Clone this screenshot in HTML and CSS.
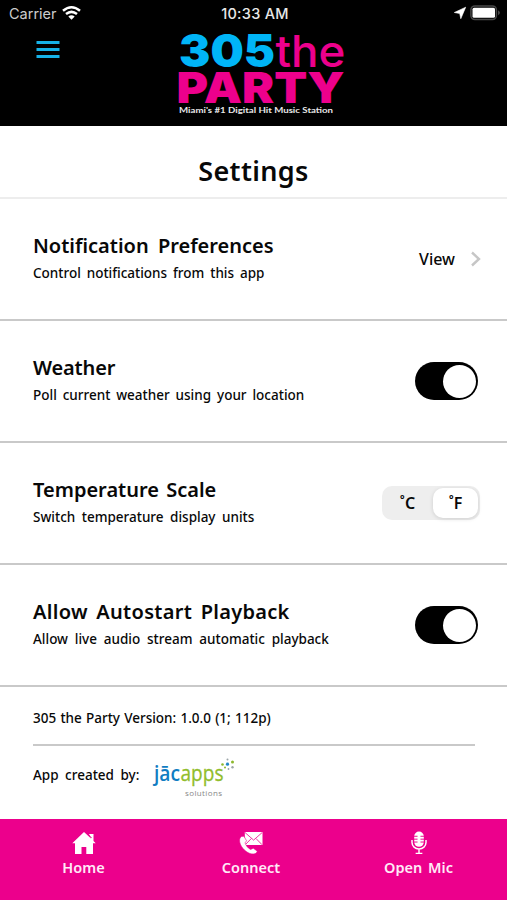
FILE: index.html
```html
<!DOCTYPE html>
<html lang="en">
<head>
<meta charset="utf-8">
<title>Settings</title>
<link rel="stylesheet" href="styles.css">
</head>
<body>
<header class="top">
  <div class="status">
    <div class="status-left">
      <span class="carrier">Carrier</span>
      <svg class="wifi" width="19" height="14" viewBox="0 0 19 14"><g fill="none" stroke="#fff" stroke-width="2.5"><path d="M1 4.8Q9.5-2.2 18 4.8"/><path d="M4 8.1Q9.5 3.7 15 8.1"/></g><path d="M6.3 10.5Q9.5 8 12.7 10.5L9.5 13.8Z" fill="#fff"/></svg>
    </div>
    <span class="clock">10:33 AM</span>
    <div class="status-right">
      <svg width="12" height="12" viewBox="0 0 12 12"><path d="M11.7.2 6.8 11.7 5.7 6.5.3 5.5Z" fill="#fff" stroke="#fff" stroke-width=".6"/></svg>
      <svg width="31" height="16" viewBox="0 0 31 16"><rect x=".9" y=".9" width="25.5" height="13.7" rx="4" fill="none" stroke="#484848" stroke-width="1.5"/><rect x="2.5" y="2.7" width="22.5" height="10" rx="1.5" fill="#fff"/><path d="M28 5.3Q32 7.8 28 10.3Z" fill="#484848"/></svg>
    </div>
  </div>
  <div class="brandbar">
    <svg class="menu" width="24" height="19" viewBox="0 0 24 19"><path d="M.5 2.5h23M.5 9.5h23M.5 16.5h23" stroke="#16b2e8" stroke-width="3.2"/></svg>
    <svg class="logo" width="190" height="92" viewBox="165 30 190 92">
      <text x="179" y="67.4" textLength="96" lengthAdjust="spacingAndGlyphs" class="blue">305</text>
      <text x="275.5" y="67.4" textLength="70" lengthAdjust="spacingAndGlyphs" class="the">the</text>
      <text x="176.5" y="102.5" textLength="168" lengthAdjust="spacingAndGlyphs" class="party">PARTY</text>
      <text x="179" y="113.2" textLength="154" lengthAdjust="spacingAndGlyphs" class="tagline">Miami's #1 Digital Hit Music Station</text>
    </svg>
  </div>
</header>
<main>
  <h1><span>Settings</span></h1>
  <section class="row">
    <div><h2 class="t1">Notification Preferences</h2><p class="p1">Control notifications from this app</p></div>
    <div class="view"><span>View</span><svg width="12" height="18" viewBox="0 0 12 18"><path d="M2 2.5 9 9 2 15.5" fill="none" stroke="#c6c6c6" stroke-width="2.4"/></svg></div>
  </section>
  <section class="row">
    <div><h2 class="t2">Weather</h2><p class="p2">Poll current weather using your location</p></div>
    <div class="toggle"><i></i></div>
  </section>
  <section class="row">
    <div><h2 class="t3">Temperature Scale</h2><p class="p3">Switch temperature display units</p></div>
    <div class="segment"><span>˚C</span><span class="on">˚F</span></div>
  </section>
  <section class="row">
    <div><h2 class="t4">Allow Autostart Playback</h2><p class="p4">Allow live audio stream automatic playback</p></div>
    <div class="toggle"><i></i></div>
  </section>
  <section class="about">
    <p class="version">305 the Party Version: 1.0.0 (1; 112p)</p>
    <div class="credit"><span class="by">App created by:</span>
      <svg width="90" height="44" viewBox="150 755 90 44"><text class="jac" x="154" y="781" textLength="26" lengthAdjust="spacingAndGlyphs">jāc</text><text class="apps" x="180.5" y="781" textLength="43" lengthAdjust="spacingAndGlyphs">apps</text><text class="solutions" x="185" y="796" textLength="37" lengthAdjust="spacing">solutions</text>
      <g fill="#8cb82b"><circle cx="222.5" cy="764.5" r="1.3"/><circle cx="232.5" cy="762" r="1.5"/><circle cx="225" cy="767.5" r="1"/></g><g fill="#9ba4a8"><circle cx="227.5" cy="759.5" r="1"/><circle cx="232.5" cy="767.3" r="1.2"/><circle cx="228.5" cy="769" r=".9"/></g><circle cx="227.5" cy="764.2" r="1.6" fill="#2387c6"/></svg>
    </div>
  </section>
</main>
<nav>
  <a class="home"><svg width="24" height="24" viewBox="0 0 24 24"><path d="M12 1 .3 12.2H3V23h6.5v-7h4.8v7H21V12.2h2.7L21.5 10V3H17l2.300 4.800L12 1Z" fill="#fff"/><path d="m16.500 3.800 3.200 3.200" stroke="#ec008c" stroke-width=".8"/></svg><span>Home</span></a>
  <a class="connect"><svg width="24" height="24" viewBox="0 0 24 24"><path d="M5.8 1h17.7v13H5.8Z" fill="#fff"/><path d="m6 1.500 8.600 7.600 8.600-7.600M6.300 13.700l6-6.200M23 13.700l-6-6.200" fill="none" stroke="#ec008c" stroke-width=".8"/><path d="M2.500 5.400C-.6 7.300.1 12.800 4 17.500c3.900 4.700 9.800 6.900 13.300 4.600l1-1.900-4-3-2.700 1.300C8.700 17 7 14.300 6 11.900L7.600 9.800 4.900 5.200Z" fill="#fff" stroke="#ec008c" stroke-width=".6"/></svg><span>Connect</span></a>
  <a class="mic"><svg width="18" height="25" viewBox="0 0 18 25"><rect x="4" y=".5" width="10" height="16" rx="5" fill="#fff"/><path d="M3.500 5.500h4M3.500 8.500h4M3.500 11.500h4M10.500 5.500h4M10.500 8.500h4M10.500 11.500h4" stroke="#ec008c" stroke-width="1"/><path d="M1.700 9.500v2.500a7.300 6.800 0 0 0 14.600 0V9.500M9 18.800v4M5.500 23.300h7" fill="none" stroke="#fff" stroke-width="1.500"/></svg><span>Open Mic</span></a>
</nav>
</body>
</html>
```
FILE: styles.css
```css
* { box-sizing: border-box; }
body { margin: 0; width: 507px; height: 900px; display: flex; flex-direction: column; overflow: hidden; background: #fff; color: #080808; font-family: "Noto Sans", "Open Sans", sans-serif; }
h1, h2, p { margin: 0; white-space: nowrap; }
svg { display: block; flex: none; overflow: visible; }
.top { height: 125.5px; background: #000; color: #e8e8e8; flex: none; }
.status { height: 28px; display: grid; grid-template-columns: 1fr auto 1fr; align-items: center; padding: 0 6px 0 9px; font: 14.5px/28px Inter, sans-serif; }
.status-left { display: flex; align-items: center; gap: 6px; }
.carrier { width: 47px; color: #ccc; }
.wifi { margin-top: -2px; }
.clock { font-weight: 500; letter-spacing: .3px; }
.status-right { display: flex; justify-content: flex-end; align-items: center; gap: 4px; margin-top: -2px; }
.brandbar { display: flex; padding: 2px 0 0 36px; }
.menu { margin-top: 10px; }
.logo { margin-left: 105px; }
.blue { font: 900 45px Inter, sans-serif; fill: #00b5f7; }
.party { font: 900 42.5px Inter, sans-serif; fill: #ed008c; }
.the { font: 500 44px Inter, sans-serif; fill: #ed008c; }
.tagline { font: 700 8px Lato, sans-serif; fill: #e8e8e8; }
main { flex: 1; }
h1 { height: 73.5px; display: flex; justify-content: center; align-items: center; padding-top: 19px; border-bottom: 2px solid #ededed; font-size: 27px; font-weight: 600; line-height: 30px; letter-spacing: .35px; }
.row { height: 122px; border-bottom: 2px solid #c9c9c9; padding: 0 29px 0 33px; display: flex; justify-content: space-between; align-items: center; }
h2 { font-size: 20px; line-height: 26px; padding-bottom: 2px; margin-top: -1px; font-weight: 600; }
.t1 { word-spacing: 4px; }
.t2 { letter-spacing: -.15px; }
.t3 { word-spacing: 2px; }
.t4 { word-spacing: 3px; letter-spacing: .3px; }
p, .by { font-size: 13.5px; line-height: 24px; font-weight: 500; }
.p1, .p2 { word-spacing: 2.4px; }
.p3 { word-spacing: 3px; }
.p4 { word-spacing: 3.3px; }
.view { display: flex; align-items: center; gap: 15px; font-size: 16px; font-weight: 500; margin-right: -4px; }
.toggle { width: 63px; height: 38px; border-radius: 19px; background: #000; display: flex; justify-content: flex-end; padding: 2.5px 2px; }
.toggle i { width: 33px; height: 33px; border-radius: 50%; background: #fff; }
.segment { width: 98px; height: 34px; padding: 2px; margin-right: -2px; border-radius: 10px; background: #eee; display: grid; grid-template-columns: 1fr 45px; font-size: 16px; line-height: 30px; font-weight: 600; text-align: center; }
.segment span:first-child { padding-right: 2px; }
.segment .on { background: #fff; border-radius: 10px; box-shadow: 0 1px 4px #0002; }
.about { margin: 0 32px 0 33px; }
.version { height: 59px; line-height: 63px; border-bottom: 2px solid #c9c9c9; word-spacing: .7px; }
.credit { display: flex; align-items: center; gap: 10px; height: 58px; }
.credit svg { margin-top: 4px; }
.by { width: 107px; white-space: nowrap; word-spacing: 3px; }
.jac, .apps { font: 600 22px "Open Sans", sans-serif; fill: #117dc2; }
.apps { font-weight: 400; fill: #91bd2c; stroke: #91bd2c; stroke-width: .3px; }
.solutions { font: 8px "Open Sans", sans-serif; fill: #888; }
nav { height: 81px; flex: none; background: #ec008c; display: grid; grid-template-columns: 167px 168px 167px; color: #ffeaf7; padding-top: 12px; }
nav a { display: flex; flex-direction: column; align-items: center; font-size: 14.5px; line-height: 22px; font-weight: 600; }
nav svg { height: 24px; }
nav span { margin-top: 1px; }
.mic { word-spacing: 2px; }
```
